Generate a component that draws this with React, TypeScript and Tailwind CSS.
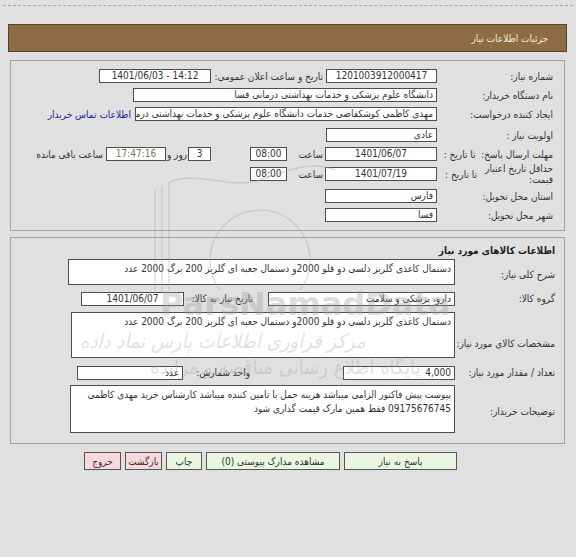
import React from 'react'

// Field box used for all the read-only inputs
function Field({
  w,
  h = 14,
  center,
  ltr,
  className = '',
  children,
}: {
  w: number
  h?: number
  center?: boolean
  ltr?: boolean
  className?: string
  children?: React.ReactNode
}) {
  return (
    <div
      dir={ltr ? 'ltr' : undefined}
      className={`shrink-0 border border-[#4d4d4d] bg-white overflow-hidden whitespace-nowrap px-[3px] leading-[12px] ${center ? 'text-center' : 'text-right'} ${className}`}
      style={{ width: w, height: h }}
    >
      {children}
    </div>
  )
}

function Area({ w, h, children }: { w: number; h: number; children?: React.ReactNode }) {
  return (
    <div
      className="shrink-0 border border-[#4d4d4d] bg-white overflow-hidden px-[3px] pt-[2px] text-right leading-[14px]"
      style={{ width: w, height: h }}
    >
      {children}
    </div>
  )
}

function Btn({ w, pink, children }: { w: number; pink?: boolean; children: React.ReactNode }) {
  return (
    <div
      className={`h-[18px] shrink-0 border border-[#555] flex items-center justify-center text-[#333] ${pink ? 'bg-[#f7d9dc]' : 'bg-[#e8f6e2]'}`}
      style={{ width: w }}
    >
      {children}
    </div>
  )
}

export default function App() {
  return (
    <div
      dir="rtl"
      className="relative w-[576px] h-[557px] overflow-hidden bg-[#e0e0e0] font-['DejaVu_Sans_Condensed','DejaVu_Sans',sans-serif] text-[10px] text-[#333]"
    >
      {/* dotted rule at the top */}
      <div className="pt-[5px] mx-[3px]">
        <div className="border-t border-dashed border-[#a8a8a8]" />
      </div>

      {/* title bar */}
      <div className="mt-[18px] mr-[9px] ml-[8px] h-[28px] bg-[#8c6d43] border border-[#54452f] flex items-center pr-[18px] text-[#f3ead9] text-[10px]">
        جزئیات اطلاعات نیاز
      </div>

      {/* panel 1 — tender info */}
      <div className="mt-[8px] mr-[11px] ml-[10px] border border-[#a3a3a3] pr-[11px] pt-[5px] pb-[6px]">
        <div className="h-[20px] flex items-center">
          <div className="w-[116px] shrink-0">شماره نیاز:</div>
          <Field w={111} center>1201003912000417</Field>
          <div className="w-[115px] shrink-0 pr-[3px] whitespace-nowrap">تاریخ و ساعت اعلان عمومی:</div>
          <Field w={112} center ltr>1401/06/03 - 14:12</Field>
        </div>
        <div className="h-[18px] flex items-center">
          <div className="w-[116px] shrink-0">نام دستگاه خریدار:</div>
          <Field w={304}>دانشگاه علوم پزشکی و خدمات بهداشتی درمانی فسا</Field>
        </div>
        <div className="h-[20px] flex items-center">
          <div className="w-[116px] shrink-0">ایجاد کننده درخواست:</div>
          <Field w={302}>مهدی  کاظمی کوشکفاضی خدمات دانشگاه علوم پزشکی و خدمات بهداشتی درمانی فسا</Field>
          <div className="pr-[4px] whitespace-nowrap text-[#23239a]">اطلاعات تماس خریدار</div>
        </div>
        <div className="h-[22px] flex items-center">
          <div className="w-[116px] shrink-0">اولویت نیاز :</div>
          <Field w={111}>عادی</Field>
        </div>
        <div className="h-[16px] flex items-center">
          <div className="w-[116px] shrink-0 whitespace-nowrap">مهلت ارسال پاسخ:&nbsp; تا تاریخ :</div>
          <Field w={112} center>1401/06/07</Field>
          <div className="w-[38px] shrink-0 pr-[2px]">ساعت</div>
          <Field w={37} center>08:00</Field>
          <div className="w-[39px] shrink-0" />
          <Field w={23} center>3</Field>
          <div className="w-[22px] shrink-0 text-center whitespace-nowrap">روز و</div>
          <Field w={60} center className="bg-[#eeeec9] text-[#77775a]">17:47:16</Field>
          <div className="pr-[3px] whitespace-nowrap">ساعت باقی مانده</div>
        </div>
        <div className="h-[24px] flex items-center">
          <div className="w-[116px] shrink-0 flex items-center">
            <div className="w-[76px] shrink-0 leading-[11px]">حداقل تاریخ اعتبار قیمت:</div>
            <div className="whitespace-nowrap">تا تاریخ :</div>
          </div>
          <Field w={112} center>1401/07/19</Field>
          <div className="w-[38px] shrink-0 pr-[2px]">ساعت</div>
          <Field w={37} center>08:00</Field>
        </div>
        <div className="h-[20px] flex items-center">
          <div className="w-[116px] shrink-0">استان محل تحویل:</div>
          <Field w={112}>فارس</Field>
        </div>
        <div className="h-[18px] flex items-center">
          <div className="w-[116px] shrink-0">شهر محل تحویل:</div>
          <Field w={112}>فسا</Field>
        </div>
      </div>

      {/* panel 2 — goods */}
      <div className="mt-[6px] mr-[11px] ml-[10px] border border-[#a3a3a3] pr-[9px] pt-[3px] pb-[10px]">
        <div className="h-[18px] flex items-center font-bold text-[#222]">اطلاعات کالاهای مورد نیاز</div>
        <div className="flex items-center">
          <div className="w-[100px] shrink-0 pt-[4px]">شرح کلی نیاز:</div>
          <Area w={387} h={26}>دستمال کاغذی گلریز دلسی دو قلو 2000و دستمال جعبه ای گلریز 200 برگ 2000 عدد</Area>
        </div>
        <div className="mt-[6px] flex items-center">
          <div className="w-[100px] shrink-0">گروه کالا:</div>
          <Field w={187}>دارو، پزشکی و سلامت</Field>
          <div className="w-[84px] shrink-0 pr-[15px] whitespace-nowrap">تاریخ نیاز به کالا:</div>
          <Field w={103} center>1401/06/07</Field>
        </div>
        <div className="mt-[6px] flex">
          <div className="w-[100px] shrink-0 self-end mb-[7px] whitespace-nowrap">مشخصات کالای مورد نیاز:</div>
          <Area w={384} h={46}>دستمال کاغذی گلریز دلسی دو قلو 2000و دستمال جعبه ای گلریز 200 برگ 2000 عدد</Area>
        </div>
        <div className="mt-[7px] flex items-center">
          <div className="w-[100px] shrink-0 whitespace-nowrap">تعداد / مقدار مورد نیاز:</div>
          <Field w={112}>4,000</Field>
          <div className="w-[160px] shrink-0 pr-[93px] whitespace-nowrap">واحد شمارش:</div>
          <Field w={106}>عدد</Field>
        </div>
        <div className="mt-[5px] flex items-center">
          <div className="w-[100px] shrink-0 pt-[4px]">توضیحات خریدار:</div>
          <Area w={385} h={48}>
            پیوست پیش فاکتور الزامی میباشد هزینه حمل با تامین کننده میباشد کارشناس خرید مهدی کاظمی 09175676745 فقط همین مارک قیمت گذاری شود
          </Area>
        </div>
      </div>

      {/* action buttons */}
      <div className="mt-[8px] pr-[119px] flex gap-[4px]">
        <Btn w={113}>پاسخ به نیاز</Btn>
        <Btn w={134}>مشاهده مدارک پیوستی (0)</Btn>
        <Btn w={36}>چاپ</Btn>
        <Btn w={37} pink>بازگشت</Btn>
        <Btn w={37} pink>خروج</Btn>
      </div>

      {/* faint watermark laid over the form */}
      <svg className="pointer-events-none absolute left-[140px] top-[150px] z-10 opacity-40" width="200" height="140" viewBox="0 0 200 140" fill="none" stroke="#a0a0a0" strokeWidth="1.2">
        <path d="M15 40 L15 140 M22 36 L22 140 M29 32 L29 140" />
        <path d="M29 32 C60 20 90 40 120 30 C150 20 170 10 195 20" />
        <circle cx="120" cy="110" r="50" />
      </svg>
      <div dir="ltr" className="pointer-events-none absolute left-[160px] top-[280px] z-10 text-[32px] font-bold text-[#a0a0a0] opacity-35 font-['DejaVu_Sans',sans-serif]">
        ParsNamadData
      </div>
      <div className="pointer-events-none absolute left-[80px] top-[326px] z-10 text-[20px] italic text-[#a0a0a0] opacity-30 whitespace-nowrap">
        مرکز فراوری اطلاعات پارس نماد داده
      </div>
      <div className="pointer-events-none absolute left-[150px] top-[352px] z-10 text-[20px] text-[#a0a0a0] opacity-30 whitespace-nowrap">
        پایگاه اطلاع رسانی مناقصه و مزایده
      </div>
    </div>
  )
}
